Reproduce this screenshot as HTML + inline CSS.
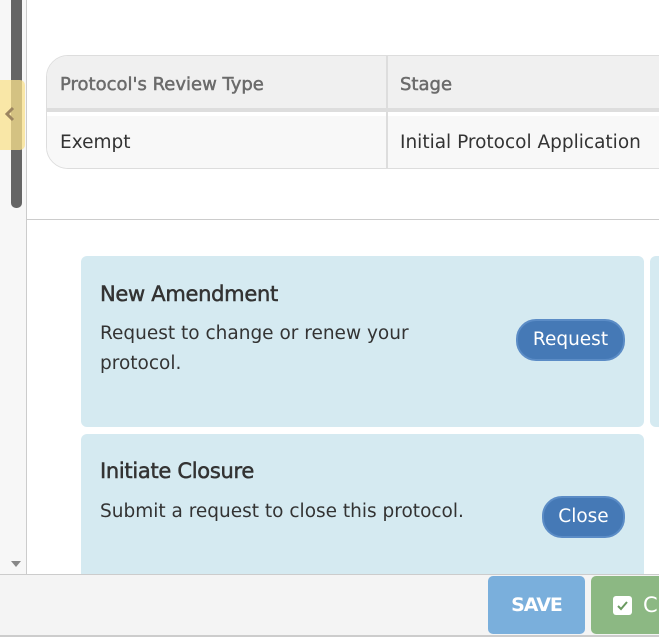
<!DOCTYPE html>
<html><head><meta charset="utf-8"><style>
*{margin:0;padding:0;box-sizing:border-box}
body{width:659px;height:643px;overflow:hidden;background:#fff;font-family:"DejaVu Sans",sans-serif;position:relative;color:#333}
.side{position:absolute;left:0;top:0;width:27px;height:574px;background:#f7f7f7;border-right:1px solid #ccc}
.sb{position:absolute;left:11px;top:0;width:11px;height:208px;background:#656565;border-radius:0 0 5px 5px}
.tab{position:absolute;left:0;top:80px;width:25px;height:70px;background:rgba(250,225,140,0.75);border-radius:0 5px 5px 0}
.arr{position:absolute;left:11px;top:561px;width:0;height:0;border-left:5px solid transparent;border-right:5px solid transparent;border-top:6px solid #888}
.hr{position:absolute;left:27px;top:219px;width:632px;height:1px;background:#ccc}
.tbl{position:absolute;left:46px;top:55px;width:640px;height:114px;border:1px solid #ddd;border-radius:22px 0 0 22px;overflow:hidden}
.th{position:absolute;top:0;left:0;right:0;height:56px;background:#f0f0f0;border-bottom:4px solid #ddd}
.td{position:absolute;top:60px;left:0;right:0;height:54px;background:#f8f8f8}
.c{position:absolute;font-size:18.5px;white-space:nowrap}
.vl{position:absolute;left:339px;top:0;width:2px;height:114px;background:#ddd}
.card{position:absolute;background:#d5eaf1;border-radius:6px}
.card h3{position:absolute;left:19px;font-size:21px;font-weight:normal;-webkit-text-stroke:0.5px #333;color:#333;white-space:nowrap;letter-spacing:-0.3px}
.card p{position:absolute;left:19px;font-size:18.5px;line-height:30px;color:#333;white-space:nowrap}
.btn{position:absolute;background:#4579b6;border:2px solid #5b8cc6;color:#fff;border-radius:20px;font-size:18.5px;text-align:center}
.foot{position:absolute;left:0;top:574px;width:659px;height:63px;background:#f4f4f4;border-top:1px solid #ccc;border-bottom:2px solid #ccc}
.save{position:absolute;left:488px;top:576px;width:97px;height:58px;background:#7aafdc;border-radius:5px;color:#fff;font-weight:bold;font-size:19px;text-align:center;line-height:58px;letter-spacing:-1px}
.gr{position:absolute;left:591px;top:576px;width:80px;height:58px;background:#8cb883;border-radius:5px;color:#fff;font-size:21px;line-height:58px}
.gr i{position:absolute;left:22px;top:20px;width:19px;height:19px;background:#fff;border-radius:3px}
.gr svg{display:block}
</style></head><body>
<div class="side"><div class="sb"></div><div class="tab"><svg width="25" height="70" style="display:block"><path d="M13 28l-6 6 6 6" stroke="#9c8560" stroke-width="3" fill="none"/></svg></div><div class="arr"></div></div>
<div class="hr"></div>
<div class="tbl">
<div class="th"></div><div class="td"></div><div class="vl"></div>
<div class="c" style="left:13px;top:18px;color:#6b6b6b;font-size:18px;font-weight:normal;-webkit-text-stroke:0.5px #6b6b6b">Protocol's Review Type</div>
<div class="c" style="left:353px;top:18px;color:#6b6b6b;font-size:18px;font-weight:normal;-webkit-text-stroke:0.5px #6b6b6b">Stage</div>
<div class="c" style="left:13px;top:76px">Exempt</div>
<div class="c" style="left:353px;top:76px">Initial Protocol Application</div>
</div>
<div class="card" style="left:81px;top:256px;width:563px;height:171px">
<h3 style="top:26px">New Amendment</h3>
<p style="top:63px">Request to change or renew your<br>protocol.</p>
<div class="btn" style="left:435px;top:63px;width:109px;height:42px;line-height:38px">Request</div>
</div>
<div class="card" style="left:650px;top:256px;width:20px;height:171px"></div>
<div class="card" style="left:81px;top:434px;width:563px;height:150px">
<h3 style="top:25px">Initiate Closure</h3>
<p style="top:63px">Submit a request to close this protocol.</p>
<div class="btn" style="left:461px;top:62px;width:83px;height:42px;line-height:38px">Close</div>
</div>
<div class="foot"></div>
<div class="save">SAVE</div>
<div class="gr"><i><svg width="19" height="19" viewBox="0 0 19 19"><path d="M5 10l3 3 6-7" stroke="#6a9a60" stroke-width="2" fill="none"/></svg></i><span style="position:absolute;left:52px">C</span></div>
</body></html>
